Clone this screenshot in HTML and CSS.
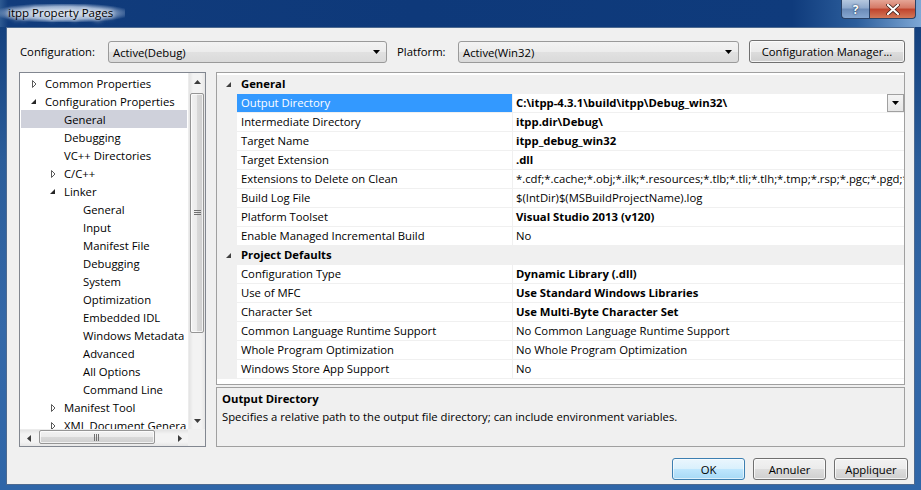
FILE: index.html
```html
<!DOCTYPE html>
<html>
<head>
<meta charset="utf-8">
<title>itpp Property Pages</title>
<link rel="stylesheet" href="styles.css">
</head>
<body>
<div class="window">
  <div class="titlebar">
    <span class="title">itpp Property Pages</span>
    <div class="caption">
      <div class="cap cap-help">?</div>
      <div class="cap cap-close">
        <svg width="14" height="11" viewBox="0 0 14 11"><path d="M2 1 L12 10 M12 1 L2 10" stroke="#3a1a14" stroke-width="3.6" stroke-linecap="round"/><path d="M2 1 L12 10 M12 1 L2 10" stroke="#fff" stroke-width="2.2" stroke-linecap="round"/></svg>
      </div>
    </div>
  </div>
  <div class="client">
    <div class="toprow">
      <span class="lbl lbl-config">Configuration:</span>
      <div class="combo combo-config"><span class="combo-text">Active(Debug)</span><svg class="combo-arrow" width="7" height="4" viewBox="0 0 7 4"><path d="M0 0 H7 L3.5 4 Z" fill="#000"/></svg></div>
      <span class="lbl lbl-plat">Platform:</span>
      <div class="combo combo-plat"><span class="combo-text">Active(Win32)</span><svg class="combo-arrow" width="7" height="4" viewBox="0 0 7 4"><path d="M0 0 H7 L3.5 4 Z" fill="#000"/></svg></div>
      <div class="btn btn-cfgmgr">Configuration Manager...</div>
    </div>

    <div class="main">
      <div class="tree">
        <div class="tree-list">
          <div class="trow l0"><svg class="exp" width="15" height="18" viewBox="0 0 15 18"><path d="M2.5 6.5 L6 10 L2.5 13.5 Z" fill="#fff" stroke="#5a5a5a"/></svg><span>Common Properties</span></div>
          <div class="trow l0"><svg class="exp" width="15" height="18" viewBox="0 0 15 18"><path d="M6 7 L6 12 L1 12 Z" fill="#262626"/></svg><span>Configuration Properties</span></div>
          <div class="trow l1 sel"><span class="noexp"></span><span>General</span></div>
          <div class="trow l1"><span class="noexp"></span><span>Debugging</span></div>
          <div class="trow l1"><span class="noexp"></span><span>VC++ Directories</span></div>
          <div class="trow l1"><svg class="exp" width="15" height="18" viewBox="0 0 15 18"><path d="M2.5 6.5 L6 10 L2.5 13.5 Z" fill="#fff" stroke="#5a5a5a"/></svg><span>C/C++</span></div>
          <div class="trow l1"><svg class="exp" width="15" height="18" viewBox="0 0 15 18"><path d="M6 7 L6 12 L1 12 Z" fill="#262626"/></svg><span>Linker</span></div>
          <div class="trow l2"><span class="noexp"></span><span>General</span></div>
          <div class="trow l2"><span class="noexp"></span><span>Input</span></div>
          <div class="trow l2"><span class="noexp"></span><span>Manifest File</span></div>
          <div class="trow l2"><span class="noexp"></span><span>Debugging</span></div>
          <div class="trow l2"><span class="noexp"></span><span>System</span></div>
          <div class="trow l2"><span class="noexp"></span><span>Optimization</span></div>
          <div class="trow l2"><span class="noexp"></span><span>Embedded IDL</span></div>
          <div class="trow l2"><span class="noexp"></span><span>Windows Metadata</span></div>
          <div class="trow l2"><span class="noexp"></span><span>Advanced</span></div>
          <div class="trow l2"><span class="noexp"></span><span>All Options</span></div>
          <div class="trow l2"><span class="noexp"></span><span>Command Line</span></div>
          <div class="trow l1"><svg class="exp" width="15" height="18" viewBox="0 0 15 18"><path d="M2.5 6.5 L6 10 L2.5 13.5 Z" fill="#fff" stroke="#5a5a5a"/></svg><span>Manifest Tool</span></div>
          <div class="trow l1"><svg class="exp" width="15" height="18" viewBox="0 0 15 18"><path d="M2.5 6.5 L6 10 L2.5 13.5 Z" fill="#fff" stroke="#5a5a5a"/></svg><span>XML Document Genera</span></div>
        </div>
        <div class="vscroll">
          <div class="sb-btn"><svg width="7" height="4" viewBox="0 0 7 4"><path d="M0 4 H7 L3.5 0 Z" fill="#3c3c3c"/></svg></div>
          <div class="vtrack">
            <div class="vthumb">
              <svg width="7" height="6" viewBox="0 0 7 6"><path d="M0 0.5 H7 M0 2.5 H7 M0 4.5 H7" stroke="#707070" stroke-width="1"/></svg>
            </div>
          </div>
          <div class="sb-btn"><svg width="7" height="4" viewBox="0 0 7 4"><path d="M0 0 H7 L3.5 4 Z" fill="#3c3c3c"/></svg></div>
        </div>
        <div class="hscroll">
          <div class="sb-hbtn"><svg width="4" height="7" viewBox="0 0 4 7"><path d="M4 0 V7 L0 3.5 Z" fill="#3c3c3c"/></svg></div>
          <div class="htrack">
            <div class="hthumb">
              <svg width="6" height="7" viewBox="0 0 6 7"><path d="M0.5 0 V7 M2.5 0 V7 M4.5 0 V7" stroke="#707070" stroke-width="1"/></svg>
            </div>
          </div>
          <div class="sb-hbtn"><svg width="4" height="7" viewBox="0 0 4 7"><path d="M0 0 V7 L4 3.5 Z" fill="#3c3c3c"/></svg></div>
        </div>
        <div class="corner"></div>
      </div>

      <div class="right">
        <div class="grid">
          <div class="prow cat"><div class="pmargin"><svg width="20" height="18" viewBox="0 0 20 18"><path d="M14 7 L14 12 L9 12 Z" fill="#404040"/></svg></div><div class="pcat">General</div></div>
          <div class="prow sel"><div class="pmargin"></div><div class="pname">Output Directory</div><div class="pval b"><span class="vtext">C:\itpp-4.3.1\build\itpp\Debug_win32\</span><div class="ddbtn"><svg width="7" height="4" viewBox="0 0 7 4"><path d="M0 0 H7 L3.5 4 Z" fill="#000"/></svg></div></div></div>
          <div class="prow"><div class="pmargin"></div><div class="pname">Intermediate Directory</div><div class="pval b">itpp.dir\Debug\</div></div>
          <div class="prow"><div class="pmargin"></div><div class="pname">Target Name</div><div class="pval b">itpp_debug_win32</div></div>
          <div class="prow"><div class="pmargin"></div><div class="pname">Target Extension</div><div class="pval b">.dll</div></div>
          <div class="prow"><div class="pmargin"></div><div class="pname">Extensions to Delete on Clean</div><div class="pval">*.cdf;*.cache;*.obj;*.ilk;*.resources;*.tlb;*.tli;*.tlh;*.tmp;*.rsp;*.pgc;*.pgd;*.r</div></div>
          <div class="prow"><div class="pmargin"></div><div class="pname">Build Log File</div><div class="pval">$(IntDir)$(MSBuildProjectName).log</div></div>
          <div class="prow"><div class="pmargin"></div><div class="pname">Platform Toolset</div><div class="pval b">Visual Studio 2013 (v120)</div></div>
          <div class="prow"><div class="pmargin"></div><div class="pname">Enable Managed Incremental Build</div><div class="pval">No</div></div>
          <div class="prow cat"><div class="pmargin"><svg width="20" height="18" viewBox="0 0 20 18"><path d="M14 7 L14 12 L9 12 Z" fill="#404040"/></svg></div><div class="pcat">Project Defaults</div></div>
          <div class="prow"><div class="pmargin"></div><div class="pname">Configuration Type</div><div class="pval b">Dynamic Library (.dll)</div></div>
          <div class="prow"><div class="pmargin"></div><div class="pname">Use of MFC</div><div class="pval b">Use Standard Windows Libraries</div></div>
          <div class="prow"><div class="pmargin"></div><div class="pname">Character Set</div><div class="pval b">Use Multi-Byte Character Set</div></div>
          <div class="prow"><div class="pmargin"></div><div class="pname">Common Language Runtime Support</div><div class="pval">No Common Language Runtime Support</div></div>
          <div class="prow"><div class="pmargin"></div><div class="pname">Whole Program Optimization</div><div class="pval">No Whole Program Optimization</div></div>
          <div class="prow"><div class="pmargin"></div><div class="pname">Windows Store App Support</div><div class="pval">No</div></div>
        </div>
        <div class="desc">
          <div class="desc-title">Output Directory</div>
          <div class="desc-text">Specifies a relative path to the output file directory; can include environment variables.</div>
        </div>
      </div>
    </div>

    <div class="buttons">
      <div class="btn btn-ok">OK</div>
      <div class="btn btn-dlg">Annuler</div>
      <div class="btn btn-apply">Appliquer</div>
    </div>
  </div>
</div>
</body>
</html>
```

FILE: styles.css
```css
* { box-sizing: border-box; }
html, body { margin: 0; padding: 0; }
body {
  width: 921px;
  height: 490px;
  overflow: hidden;
  font-family: "Open Sans", "Noto Sans", "DejaVu Sans", sans-serif;
  font-size: 11.3px;
  color: #000;
}

.window {
  width: 921px;
  height: 490px;
  display: flex;
  flex-direction: column;
  background: linear-gradient(180deg, #0f3a7a 0px, #14417f 30px, #2b5d9a 160px, #3468a8 330px, #2f66a8 490px);
}

/* title bar */
.titlebar {
  height: 27px;
  flex: none;
  display: flex;
  align-items: flex-start;
  background: linear-gradient(90deg, #2e5a92 0px, #113c7c 8px, #0e397a 45%, #0f3b7c 86%, #2c5e9c 93%, #7ea8d6 100%);
}
.title {
  margin-top: 4px;
  padding: 1px 12px 2px 8px;
  height: 18px;
  line-height: 16px;
  font-size: 11.5px;
  color: #000;
  background: radial-gradient(ellipse at center, rgba(228,236,247,0.9) 0%, rgba(200,216,238,0.75) 50%, rgba(120,155,200,0) 80%);
  text-shadow: 0 0 6px #fff, 0 0 4px #fff;
}
.caption {
  margin-left: auto;
  margin-right: 5px;
  display: flex;
}
.cap {
  height: 19px;
  display: flex;
  align-items: center;
  justify-content: center;
  border: 1px solid #2a4266;
  border-top: none;
}
.cap-help {
  width: 28px;
  border-right: none;
  border-radius: 0 0 0 4px;
  background: linear-gradient(180deg, #b5c8df 0%, #8ea9cc 45%, #6b8bb7 50%, #86a7d1 100%);
  color: #fff;
  font-weight: bold;
  font-size: 12px;
  text-shadow: 0 0 2px #203a60, 0 0 1px #203a60;
}
.cap-close {
  width: 47px;
  border-radius: 0 0 4px 0;
  background: linear-gradient(180deg, #e5a596 0%, #d47864 45%, #c0432c 50%, #d27858 100%);
}

/* client */
.client {
  flex: 1;
  margin: 0 6px 5px 6px;
  border: 1px solid #4d6a90;
  background: #f0f0f0;
  padding: 12px 9px 0 12px;
  display: flex;
  flex-direction: column;
  min-width: 0;
}

.toprow {
  height: 23px;
  display: flex;
  align-items: center;
  flex: none;
}
.lbl { white-space: nowrap; }
.lbl-config { width: 89px; padding-left: 1px; }
.lbl-plat { width: 61px; margin-left: 10px; }
.combo {
  height: 22px;
  margin-top: 1px;
  display: flex;
  align-items: center;
  border: 1px solid #9a9a9a;
  border-radius: 3px;
  background: linear-gradient(180deg, #f3f3f3 0%, #ececec 50%, #e1e1e1 51%, #dadada 100%);
  padding: 0 6px 0 4px;
  flex: none;
}
.combo-config { width: 279px; }
.combo-plat { width: 281px; }
.combo-text { flex: 1; }
.combo-arrow { flex: none; }

.btn {
  height: 23px;
  display: flex;
  align-items: center;
  justify-content: center;
  border: 1px solid #707070;
  border-radius: 3px;
  background: linear-gradient(180deg, #f2f2f2 0%, #ebebeb 50%, #dddddd 51%, #cfcfcf 100%);
  box-shadow: inset 0 0 0 1px rgba(255,255,255,0.75);
  white-space: nowrap;
  flex: none;
}
.btn-cfgmgr { width: 156px; margin-left: 10px; }

/* main area */
.main {
  margin-top: 9px;
  height: 375px;
  flex: none;
  display: flex;
}

.tree {
  width: 187px;
  flex: none;
  border: 1px solid #828790;
  background: #fff;
  display: grid;
  grid-template-columns: 1fr 17px;
  grid-template-rows: 1fr 17px;
}
.tree-list {
  overflow: hidden;
  padding-top: 1px;
  min-width: 0;
}
.trow {
  height: 18px;
  margin: 0 1px;
  display: flex;
  align-items: center;
  white-space: nowrap;
}
.trow.l0 { padding-left: 9px; }
.trow.l1 { padding-left: 28px; }
.trow.l2 { padding-left: 47px; }
.trow .exp, .trow .noexp { width: 15px; height: 18px; flex: none; display: block; }
.trow.sel { background: #cfd1db; }

.vscroll {
  display: flex;
  flex-direction: column;
  background: linear-gradient(90deg, #e3e3e3 0%, #f3f3f3 25%, #f3f3f3 75%, #e6e6e6 100%);
  border-left: 1px solid #ececec;
}
.sb-btn {
  height: 17px;
  flex: none;
  display: flex;
  align-items: center;
  justify-content: center;
}
.vtrack {
  flex: 1;
  padding-top: 3px;
}
.vthumb {
  height: 240px;
  margin: 0 1px;
  border: 1px solid #959595;
  border-radius: 2px;
  background: linear-gradient(90deg, #f2f2f2 0%, #ebebeb 50%, #d9d9d9 51%, #cfcfcf 100%);
  box-shadow: inset 0 0 0 1px rgba(255,255,255,0.7);
  display: flex;
  align-items: center;
  justify-content: center;
}
.hscroll {
  display: flex;
  background: linear-gradient(180deg, #e3e3e3 0%, #f3f3f3 25%, #f3f3f3 75%, #e6e6e6 100%);
  border-top: 1px solid #ececec;
}
.sb-hbtn {
  width: 17px;
  flex: none;
  display: flex;
  align-items: center;
  justify-content: center;
}
.htrack {
  flex: 1;
  padding-left: 2px;
}
.hthumb {
  width: 116px;
  height: 14px;
  border: 1px solid #959595;
  border-radius: 2px;
  background: linear-gradient(180deg, #f2f2f2 0%, #ebebeb 50%, #d9d9d9 51%, #cfcfcf 100%);
  box-shadow: inset 0 0 0 1px rgba(255,255,255,0.7);
  display: flex;
  align-items: center;
  justify-content: center;
}
.corner { background: #f0f0f0; }

.right {
  width: 689px;
  flex: none;
  min-width: 0;
  margin-left: 10px;
  display: flex;
  flex-direction: column;
}
.grid {
  height: 313px;
  flex: none;
  border: 1px solid #a0a0a0;
  background: #fff;
  padding-top: 2px;
  overflow: hidden;
}
.prow {
  height: 19px;
  display: flex;
  border-bottom: 1px solid #f0f0f0;
  white-space: nowrap;
}
.pmargin {
  width: 20px;
  flex: none;
  background: #f0f0f0;
}
.pmargin svg { display: block; }
.pname {
  width: 276px;
  flex: none;
  padding-left: 4px;
  line-height: 18px;
  border-right: 1px solid #f0f0f0;
  overflow: hidden;
}
.pval {
  flex: 1;
  min-width: 0;
  padding-left: 3px;
  line-height: 18px;
  overflow: hidden;
  position: relative;
}
.pval.b { font-weight: bold; }
.prow.sel .pname { background: #3399ff; color: #fff; }
.prow.cat { background: #f0f0f0; border-bottom-color: #f0f0f0; }
.pcat {
  padding-left: 4px;
  line-height: 18px;
  font-weight: bold;
}
.ddbtn {
  position: absolute;
  right: 0;
  top: 0;
  width: 17px;
  height: 18px;
  border: 1px solid #a0a0a0;
  background: linear-gradient(180deg, #f4f4f4 0%, #e6e6e6 100%);
  display: flex;
  align-items: center;
  justify-content: center;
}

.desc {
  margin-top: 2px;
  height: 60px;
  flex: none;
  border: 1px solid #a0a0a0;
  background: #f0f0f0;
  padding: 3px 5px 0 5px;
}
.desc-title { font-weight: bold; line-height: 16px; }
.desc-text { line-height: 16px; margin-top: 2px; }

.buttons {
  margin-top: 11px;
  margin-right: -3px;
  display: flex;
  justify-content: flex-end;
  gap: 8px;
  flex: none;
}
.buttons .btn { height: 22px; width: 73px; }
.buttons .btn-apply { width: 74px; }
.btn-ok {
  border-color: #3c7fb1;
  background: linear-gradient(180deg, #eaf6fd 0%, #d9f0fc 50%, #bee6fd 51%, #a7d9f5 100%);
  box-shadow: inset 0 0 0 1px rgba(255,255,255,0.6);
}
```
